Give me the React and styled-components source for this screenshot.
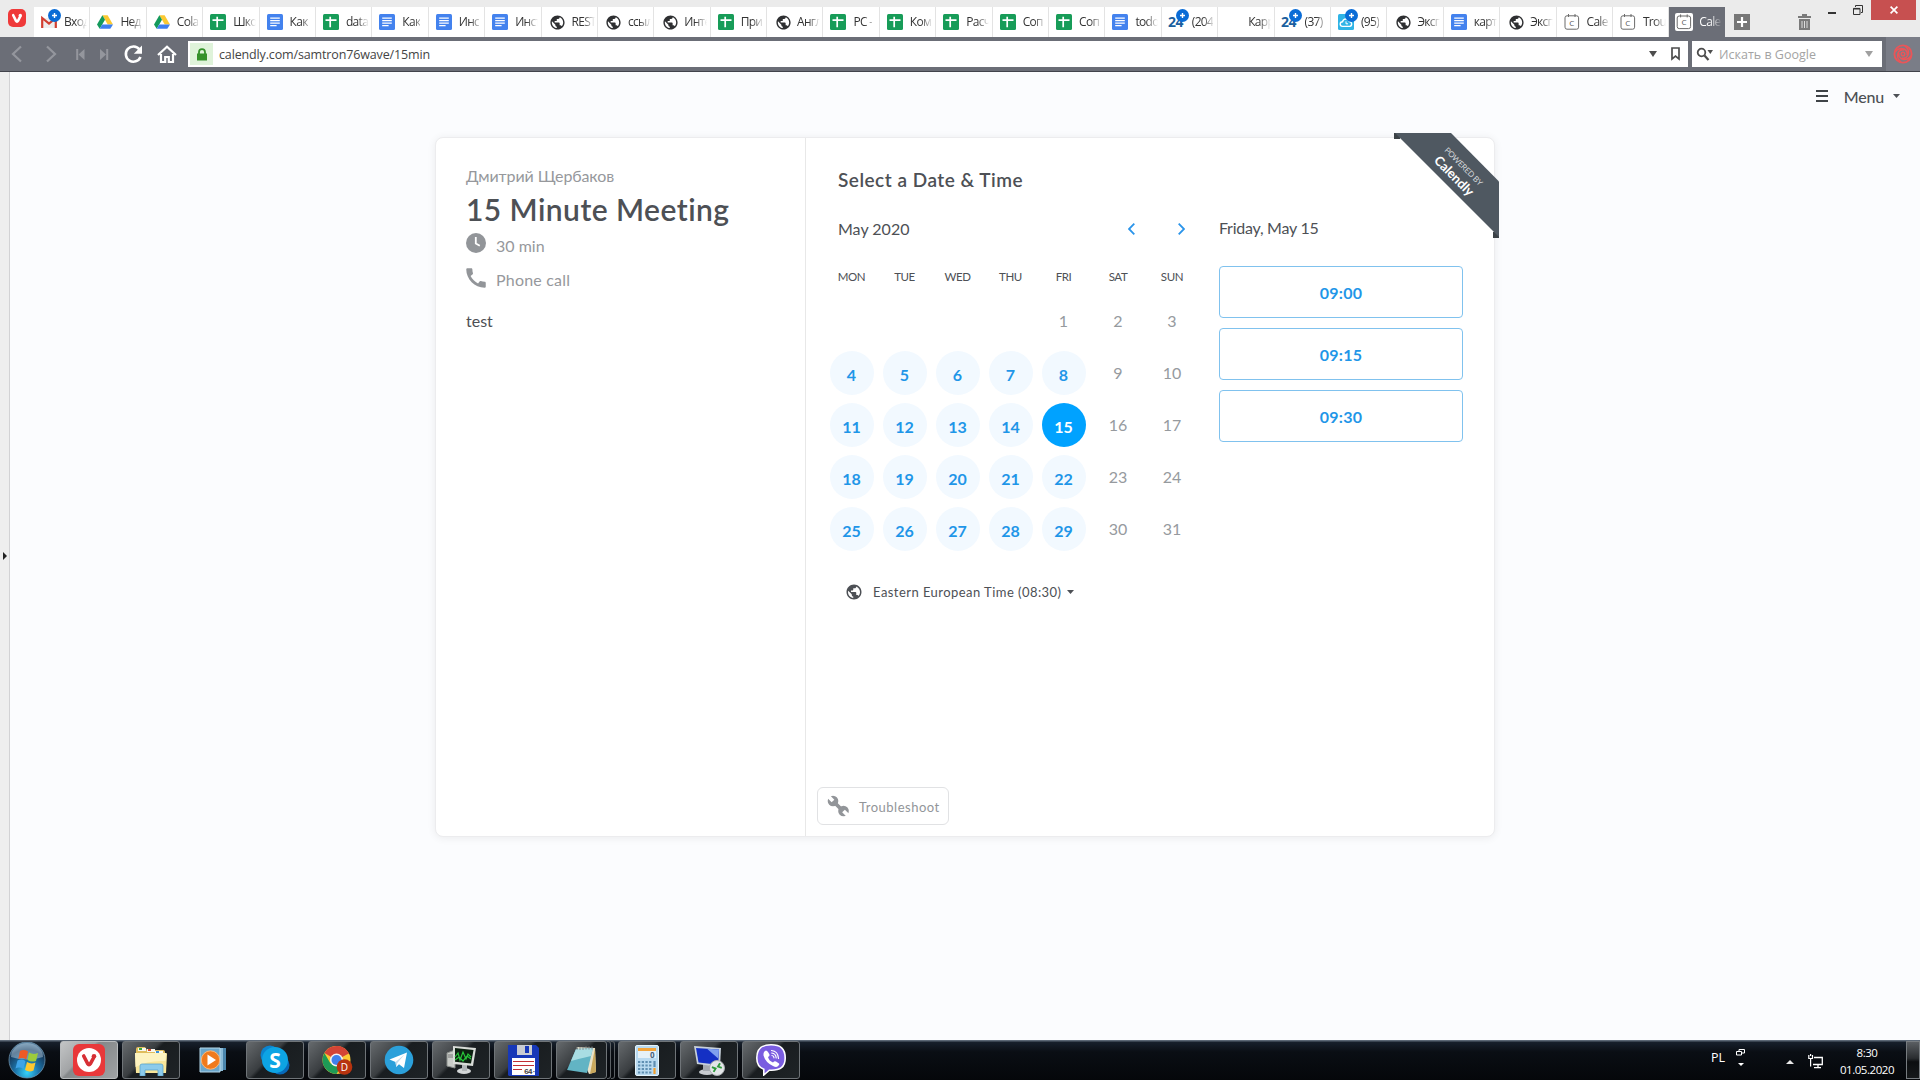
import React from "react";
import styled, { createGlobalStyle, css } from "styled-components";
import { MdPublic, MdCall } from "react-icons/md";

const UI = `"Lato", "Open Sans", sans-serif`;
const SYS = `"Open Sans", "Noto Sans", sans-serif`;

const Global = createGlobalStyle`
  * { box-sizing: border-box; }
  html, body { margin: 0; padding: 0; }
  body { width: 1920px; height: 1080px; overflow: hidden; background: #fbfcfe; }
  svg { display: block; flex: none; }
`;

const Screen = styled.div`
  display: flex;
  flex-direction: column;
  width: 1920px;
  height: 1080px;
`;

/* ---------- browser tabs ---------- */

const TabStrip = styled.header`
  display: flex;
  height: 37px;
  background: #ebebeb;
  font-family: ${SYS};
`;
const VivaldiSlot = styled.div`
  width: 34px;
  padding: 9px 0 0 8px;
`;
const TabList = styled.div`
  display: grid;
  grid-template-columns: repeat(29, 56.4px) 55.4px;
  margin-top: 7px;
  height: 30px;
`;
const Tab = styled.div`
  display: flex;
  align-items: center;
  padding: 0 0 0 ${(p) => (p.$active ? 6 : 7)}px;
  gap: ${(p) => (p.$active ? 6 : 7)}px;
  background: ${(p) => (p.$active ? "#6b6e77" : "#fff")};
  border-right: ${(p) => (p.$active ? 0 : 1)}px solid #e3e3e3;
`;
const TabLabel = styled.span`
  flex: none;
  white-space: nowrap;
  font-size: 12px;
  line-height: 18px;
  letter-spacing: -0.7px;
  color: ${(p) => (p.$active ? "#fff" : "#333")};
  mask-image: linear-gradient(90deg, #000 11px, transparent 23px);
`;
const IconHolder = styled.span`
  position: relative;
  display: block;
  flex: none;
`;
const Badge = styled.svg`
  position: absolute;
  left: 7px;
  top: -5px;
`;
const NewTab = styled.div`
  margin: 14px 0 0 9px;
`;
const WindowTools = styled.div`
  display: flex;
  flex: 1;
  justify-content: flex-end;
  padding-right: 4px;
`;
const Trash = styled.div`
  margin: 14px 17px 0 0;
`;
const Minimise = styled.div`
  width: 8px;
  height: 2px;
  margin: 12px 17px 0 0;
  background: #333;
`;
const Restore = styled.div`
  margin: 5px 8px 0 0;
`;
const Close = styled.div`
  display: flex;
  align-items: center;
  justify-content: center;
  width: 45px;
  height: 20px;
  background: #c75050;
`;

/* ---------- address bar ---------- */

const AddressBar = styled.nav`
  display: flex;
  height: 35px;
  padding-top: 4px;
  background: #6b6e77;
  border-bottom: 1px solid #41434b;
  font-family: ${SYS};
`;
const NavIcons = styled.div`
  display: flex;
  width: 188px;
  height: 26px;
`;
const Field = styled.div`
  display: flex;
  align-items: center;
  width: ${(p) => p.$w}px;
  height: 26px;
  margin-right: 4px;
  background: #fff;
`;
const Lock = styled.div`
  display: flex;
  align-items: center;
  justify-content: center;
  width: 23px;
  height: 22px;
  margin: 0 6px 0 2px;
  background: #dff3da;
`;
const Url = styled.span`
  flex: 1;
  padding-top: 2px;
  white-space: nowrap;
  font-size: 12.5px;
  line-height: 20px;
  color: ${(p) => (p.$dim ? "#a3a3a3" : "#444")};
  letter-spacing: ${(p) => (p.$dim ? 0 : -0.14)}px;
`;
const Extension = styled.div`
  display: flex;
  align-items: center;
  justify-content: center;
  width: 34px;
  height: 34px;
  margin-top: -4px;
  background: #7a7d87;
`;

/* ---------- page ---------- */

const Body = styled.div`
  display: flex;
  height: 968px;
`;
const PanelToggle = styled.aside`
  display: flex;
  align-items: center;
  width: 10px;
  padding-left: 3px;
  background: #eeeeee;
  border-right: 1px solid #d2d2d4;
`;
const Page = styled.main`
  flex: 1;
  background: #fbfcfe;
  font-family: ${UI};
  color: #4d5055;
`;
const MenuRow = styled.div`
  display: flex;
  justify-content: flex-end;
  height: 65px;
  padding: 13px 20px 0 0;
`;
const MenuText = styled.span`
  margin: 0 9px 0 16px;
  font-size: 16px;
  line-height: 24px;
  font-weight: 500;
  letter-spacing: -0.2px;
`;
const MenuGlyph = styled.span`
  padding-top: ${(p) => p.$top}px;
`;
const Card = styled.section`
  display: flex;
  width: 1060px;
  height: 700px;
  margin-left: 425px;
  background: #fff;
  border: 1px solid #ececee;
  border-radius: 8px;
  box-shadow: 0 1px 8px rgba(0, 0, 0, 0.07);
`;
const Info = styled.div`
  display: flex;
  flex-direction: column;
  width: 370px;
  padding: 27px 0 0 30px;
  border-right: 1px solid #e8e8e8;
`;
const Line = styled.div`
  white-space: nowrap;
  font-size: ${(p) => p.$size}px;
  line-height: ${(p) => p.$lh}px;
  font-weight: ${(p) => p.$weight || 400};
  letter-spacing: ${(p) => p.$ls || 0}px;
  color: ${(p) => p.$color || "#4d5055"};
  margin-top: ${(p) => p.$mt || 0}px;
`;
const Detail = styled.div`
  display: flex;
  gap: 10px;
  height: 34px;
  margin-top: ${(p) => p.$mt || 0}px;
`;
const PhoneIcon = styled(MdCall)`
  margin: -2px -3px 0 -3px;
`;
const Booking = styled.div`
  display: flex;
  flex-direction: column;
  flex: 1;
  padding: 29px 0 0 32px;
`;
const Columns = styled.div`
  display: flex;
  height: 594px;
`;
const Calendar = styled.div`
  width: 381px;
`;
const MonthRow = styled.div`
  display: flex;
  align-items: center;
  height: 24px;
  padding-right: 34px;
  margin-top: 24px;
  gap: 43px;
`;
const MonthName = styled(Line)`
  flex: 1;
`;
const WeekGrid = styled.div`
  display: grid;
  grid-template-columns: repeat(5, 53px) 56px 52px;
  margin: 24px 0 0 -13px;
  width: 373px;
  justify-items: center;
`;
const Weekday = styled.div`
  height: 34px;
  font-size: 11.5px;
  line-height: 24px;
  letter-spacing: -0.4px;
  color: #4d5055;
`;
const Day = styled.div`
  display: flex;
  align-items: center;
  justify-content: center;
  width: 44px;
  height: 44px;
  margin-bottom: 8px;
  font-size: 16px;
  line-height: 20px;
  border-radius: 50%;
  color: #969a9e;
  ${(p) =>
    p.$open &&
    css`
      padding-top: 4px;
      font-weight: 700;
      color: ${p.$selected ? "#fff" : "#1f96e8"};
      background: ${p.$selected ? "#00a2ff" : "#f2f9ff"};
    `}
`;
const Zone = styled.div`
  display: flex;
  align-items: center;
  gap: 5px;
  margin: 22px 0 0 7px;
`;
const ZoneGlobe = styled(MdPublic)`
  margin-right: 5px;
`;
const Slots = styled.div`
  display: flex;
  flex-direction: column;
  width: 244px;
`;
const SlotDate = styled(Line)`
  margin-bottom: 27px;
`;
const Slot = styled.div`
  display: flex;
  align-items: center;
  justify-content: center;
  height: 52px;
  margin-bottom: 10px;
  padding-top: 1px;
  border: 1px solid #80c2ee;
  border-radius: 4px;
  font-size: 16px;
  font-weight: 700;
  letter-spacing: 0.3px;
  color: #1f96e8;
`;
const Trouble = styled.div`
  display: flex;
  align-items: center;
  width: 132px;
  height: 38px;
  margin-left: -21px;
  padding-left: 9px;
  gap: 10px;
  border: 1px solid #e1e2e4;
  border-radius: 6px;
`;
const RibbonBox = styled.div`
  position: absolute;
  left: 1394px;
  top: 133px;
  width: 105px;
  height: 105px;
`;
const RibbonText = styled.div`
  position: absolute;
  left: 24px;
  top: 26px;
  width: 80px;
  transform: rotate(45deg);
  text-align: center;
  color: #fff;
  white-space: nowrap;
`;
const Powered = styled.div`
  font-size: 8px;
  line-height: 10px;
  letter-spacing: -0.2px;
  color: #d5d9dc;
`;
const Brand = styled.div`
  font-size: 13px;
  line-height: 16px;
  font-weight: 700;
`;

/* ---------- taskbar ---------- */

const Taskbar = styled.footer`
  display: flex;
  height: 40px;
  padding-top: 1px;
  background: linear-gradient(180deg, #5c6876 0, #5c6876 1px, #17202c 2px, #0a0e14 12px, #05070a 100%);
  font-family: ${SYS};
  color: #fff;
`;
const Start = styled.div`
  width: 60px;
  padding: 1px 0 0 8px;
`;
const Task = styled.div`
  display: flex;
  align-items: center;
  justify-content: center;
  width: ${(p) => p.$w || 58}px;
  height: 38px;
  margin-right: ${(p) => (p.$stack ? 0 : 4)}px;
  ${(p) =>
    !p.$bare &&
    css`
      border: 1px solid ${p.$active ? "#b8bbbd" : "#6f7478"};
      border-radius: 3px;
      background: ${p.$active
        ? "linear-gradient(135deg, #c3c5c6 0, #a2a4a6 38%, #85888a 42%, #9fa2a4 100%)"
        : "linear-gradient(135deg, #666a6d 0, #3a3e41 40%, #191d20 46%, #1e2326 100%)"};
    `}
`;
const StackEdge = styled.div`
  width: 4px;
  height: 38px;
  margin-right: ${(p) => (p.$last ? 3 : 0)}px;
  border: 1px solid #5b6064;
  border-left: 0;
  border-radius: 0 3px 3px 0;
`;
const Spacer = styled.div`
  flex: 1;
`;
const Lang = styled.span`
  width: 25px;
  padding-top: 8px;
  font-size: 12.5px;
  line-height: 18px;
`;
const LangTools = styled.div`
  display: flex;
  flex-direction: column;
  align-items: center;
  gap: 7px;
  width: 9px;
  padding-top: 8px;
`;
const TrayArrow = styled.div`
  margin: 19px 14px 0 41px;
`;
const Network = styled.div`
  margin: 13px 5px 0 0;
`;
const Clock = styled.div`
  width: 78px;
  padding-top: 3px;
  text-align: center;
  font-size: 11.5px;
  line-height: 17px;
  letter-spacing: -0.45px;
`;
const Peek = styled.div`
  width: 14px;
  height: 38px;
  border: 1px solid #777c80;
  background: linear-gradient(180deg, #5a5e62 0, #2a2d30 45%, #0c0e10 55%, #16191b 100%);
`;

/* ---------- drawings ---------- */

const VivaldiMark = ({ size = 18 }) => (
  <svg width={size} height={size} viewBox="0 0 18 18">
    <rect width="18" height="18" rx="5" fill="#ef3939" />
    <path d="M5.2 6.2 L8 11.9 Q9 13.6 10 11.9 L12.3 7.4" fill="none" stroke="#fff" strokeWidth="2.6" strokeLinecap="round" strokeLinejoin="round" />
    <circle cx="12.3" cy="6.4" r="1.7" fill="#fff" />
  </svg>
);
const PlusBadge = () => (
  <Badge width="13" height="13" viewBox="0 0 13 13">
    <circle cx="6.5" cy="6.5" r="6.5" fill="#0a6cd6" />
    <path d="M6.5 4v5M4 6.5h5" stroke="#fff" strokeWidth="1.4" />
  </Badge>
);
const TabGlobe = styled(MdPublic)`
  margin: 0 -1.500px 0 0.5px;
`;
const favicons = {
  gmail: (
    <svg width="16" height="16" viewBox="0 0 16 16">
      <path d="M2 4h12v10H2z" fill="#eee" />
      <path d="M1.2 14V4L8 9.5 14.8 4v10" fill="none" stroke="#d23f31" strokeWidth="2.2" />
    </svg>
  ),
  drive: (
    <svg width="16" height="16" viewBox="0 0 16 16">
      <path d="M5.4 1.2h5.2L16 10.4h-5.3z" fill="#fbc931" />
      <path d="M5.4 1.2 8 5.7 2.7 14.8 0 10.4z" fill="#149a5c" />
      <path d="M5.2 10.4H16l-2.7 4.4H2.7z" fill="#3d7fee" />
    </svg>
  ),
  sheet: (
    <svg width="16" height="16" viewBox="0 0 16 16">
      <rect width="16" height="16" rx="1.5" fill="#179c58" />
      <path d="M2.5 6.2h11M7.2 2.8v10.4" stroke="#fff" strokeWidth="1.7" />
    </svg>
  ),
  doc: (
    <svg width="16" height="16" viewBox="0 0 16 16">
      <rect width="16" height="16" rx="1.5" fill="#4382ee" />
      <path d="M3.2 4.2h9.6M3.2 6.7h9.6M3.2 9.2h9.6M3.2 11.7h6.4" stroke="#fff" strokeWidth="1.3" />
    </svg>
  ),
  globe: <TabGlobe size={17} color="#2e2f31" />,
  b24: (
    <svg width="16" height="16" viewBox="0 0 16 16" overflow="visible">
      <text x="-1" y="13" fontFamily="Open Sans" fontWeight="700" fontSize="14" letterSpacing="-0.5" fill="#1b5f9e">24</text>
    </svg>
  ),
  cloud: (
    <svg width="16" height="16" viewBox="0 0 16 16">
      <rect width="16" height="16" rx="1.5" fill="#2fb4e6" />
      <path d="M4.500 12.400a2.300 2.300 0 0 1 0-4.600A3.600 3.600 0 0 1 11.400 7.500a2.500 2.500 0 0 1 .4 4.900z" fill="none" stroke="#fff" strokeWidth="1.400" />
      <path d="M8 7.400v2.400h2" fill="none" stroke="#fff" strokeWidth="1" />
    </svg>
  ),
  blank: <svg width="16" height="16" />,
  cal: (
    <svg width="16" height="16" viewBox="0 0 16 16">
      <rect x="1" y="1.8" width="13.6" height="13.4" rx="2" fill="#fff" stroke="#6b6b6b" />
      <path d="M4.5 0v3M11 0v3" stroke="#6b6b6b" />
      <text x="5.2" y="11.6" fontFamily="Open Sans" fontSize="8" fill="#555">C</text>
    </svg>
  ),
  calActive: (
    <svg width="18" height="18" viewBox="0 0 18 18">
      <rect width="18" height="18" rx="2" fill="#fff" />
      <rect x="2.2" y="3" width="13.4" height="12.6" rx="2" fill="#fff" stroke="#6b6b6b" />
      <path d="M5.6 1.4v3M12.2 1.4v3" stroke="#6b6b6b" />
      <text x="6.4" y="12.4" fontFamily="Open Sans" fontSize="8" fill="#555">C</text>
    </svg>
  ),
};

const TABS = [
  ["gmail", "Вход", 1], ["drive", "Нед"], ["drive", "Cola"], ["sheet", "Шко"],
  ["doc", "Как"], ["sheet", "data"], ["doc", "Как"], ["doc", "Инс"], ["doc", "Инст"],
  ["globe", "REST"], ["globe", "ссыл"], ["globe", "Инте"], ["sheet", "При"], ["globe", "Англ"],
  ["sheet", "PC -"], ["sheet", "Ком"], ["sheet", "Расч"], ["sheet", "Соп"], ["sheet", "Соп"],
  ["doc", "todo"], ["b24", "(204", 1], ["blank", "Карр"], ["b24", "(37)", 1], ["cloud", "(95)", 1],
  ["globe", "Эксп"], ["doc", "карт"], ["globe", "Эксп"], ["cal", "Cale"], ["cal", "Trou"],
  ["calActive", "Cale"],
];

const NavGlyphs = () => (
  <svg width="188" height="26" viewBox="0 41 188 26" fill="none">
    <path d="M21 46.5 13 54l8 7.5M47 46.5 55 54l-8 7.5" stroke="#94969d" strokeWidth="2.2" />
    <path d="M77.2 49v11M107.2 49v11" stroke="#94969d" strokeWidth="2" />
    <path d="M84.5 49v11l-6-5.5zM100 49v11l6-5.5z" fill="#94969d" />
    <path d="M139.5 49.5A7.6 7.6 0 1 0 140.5 57" stroke="#fff" strokeWidth="2.6" />
    <path d="M142 45.5v8.2h-8.2z" fill="#fff" />
    <path d="M158 55 167 46.8 176 55M161 54v8h4.2v-5h3.6v5h4.2v-8" stroke="#fff" strokeWidth="2.2" />
  </svg>
);
const Caret = ({ w, h, color }) => (
  <svg width={w} height={h} viewBox="0 0 10 6" preserveAspectRatio="none"><path d="M0 0h10L5 6z" fill={color} /></svg>
);

const StartOrb = () => (
  <svg width="38" height="37" viewBox="0 0 38 37">
    <defs>
      <radialGradient id="orb" cx="50%" cy="85%" r="80%">
        <stop offset="0" stopColor="#35d3fb" /><stop offset=".4" stopColor="#1c76ac" /><stop offset=".8" stopColor="#16385a" /><stop offset="1" stopColor="#4f7898" />
      </radialGradient>
    </defs>
    <circle cx="19" cy="18" r="18" fill="url(#orb)" stroke="#6c93ad" strokeWidth=".8" />
    <path d="M3 15a16 14 0 0 1 32 0q-16 5-32 0z" fill="#c5dcea" opacity=".45" />
    <path d="M12 9q4-2 8 .5L18.300 17.500q-4-2.500-8-.5z" fill="#ee5a25" />
    <path d="M21 10.500q4 2.500 9 .5l-2 8q-5 1.500-8.500-1z" fill="#9dcb3b" />
    <path d="M9.500 18.500q4-2 8 .5l-2 8q-4-2.500-8-.5z" fill="#3ea4e8" />
    <path d="M19 20q4 2.500 8.500.5l-2 8q-4.500 2-8.500-.5z" fill="#fdc82f" />
  </svg>
);
const taskIcons = {
  vivaldi: (
    <svg width="32" height="32" viewBox="0 0 32 32">
      <rect width="32" height="32" rx="6" fill="#e9383a" />
      <circle cx="16" cy="16" r="12" fill="#fff" />
      <path d="M10.700 12 14.700 19.800q1.300 2 2.600 0L20.500 14" fill="none" stroke="#d72f35" strokeWidth="3.600" strokeLinecap="round" strokeLinejoin="round" />
      <circle cx="21" cy="12.200" r="2.300" fill="#d72f35" />
    </svg>
  ),
  explorer: (
    <svg width="34" height="32" viewBox="0 0 34 32">
      <path d="M2 5q0-2 2-2h7l2 3h16q2 0 2 2v19H2z" fill="#e0bd5c" />
      <path d="M4 4h8v3H4zM13 5h8v3h-8zM21 7h8v3h-8z" fill="#f8f8f0" />
      <path d="M5 4h3v2H5z" fill="#3ba53b" /><path d="M14 5h3v2h-3z" fill="#d84a2a" /><path d="M22 7h3v2h-3z" fill="#3a8fd8" />
      <path d="M1 9h31q1 0 1 1l-1 19H2z" fill="#f8e69a" />
      <path d="M1 9h31l-.5 8Q14 16 1.500 23z" fill="#fdf3c0" />
      <path d="M6 32V22q0-2 2-2h19q2 0 2 2v10h-5v-6H11v6z" fill="#8ccbec" stroke="#5ba5cf" strokeWidth=".8" />
    </svg>
  ),
  player: (
    <svg width="28" height="26" viewBox="0 0 28 26">
      <path d="M7 1h20v22H7z" fill="#4b86ad" /><path d="M5 1h19v23H5z" fill="#8cbcd8" /><path d="M1 1h20v24H1z" fill="#6aa6cb" stroke="#b4d8ea" />
      <circle cx="11.500" cy="13" r="9.200" fill="#f07a1c" stroke="#fbb877" />
      <path d="M8.500 7.500v11l8.500-5.500z" fill="#fff" />
    </svg>
  ),
  skype: (
    <svg width="30" height="30" viewBox="0 0 30 30">
      <circle cx="10" cy="10" r="9.500" fill="#0b84cf" /><circle cx="20" cy="20" r="9.500" fill="#0769b9" />
      <circle cx="15" cy="15" r="13" fill="#0da4e4" />
      <text x="15" y="22.500" textAnchor="middle" fontFamily="Open Sans" fontWeight="700" fontSize="21" fill="#fff">S</text>
    </svg>
  ),
  chrome: (
    <svg width="31" height="30" viewBox="0 0 31 30">
      <circle cx="14.500" cy="15" r="14" fill="#fcc934" />
      <path d="M14.500 15 2.400 8A14 14 0 0 1 26.800 8.400z" fill="#d34436" />
      <path d="M2.400 8A14 14 0 0 0 14.500 29l6-10.500L8.500 18.500z" fill="#1e9b56" />
      <path d="M14.500 8.500H26.800a14 14 0 0 0-12.300-7.500z" fill="#d34436" />
      <circle cx="14.500" cy="15" r="6.500" fill="#f4f4f4" /><circle cx="14.500" cy="15" r="5" fill="#4081ec" />
      <circle cx="22.500" cy="22" r="7.800" fill="#b7330f" />
      <text x="22.500" y="25.600" textAnchor="middle" fontFamily="Open Sans" fontSize="10" fill="#fff">D</text>
    </svg>
  ),
  telegram: (
    <svg width="30" height="30" viewBox="0 0 30 30">
      <circle cx="15" cy="15" r="14.300" fill="#2ba0da" />
      <path d="M5.500 14.500 23 7.500l-3 15.500-5-3.700-2.800 2.700-.7-5z" fill="#fff" /><path d="m11.500 17 9-7.500-7.200 8.600-1 4z" fill="#c3dcec" />
    </svg>
  ),
  monitor: (
    <svg width="32" height="30" viewBox="0 0 32 30">
      <path d="M2 8 10 5v18l-8-2z" fill="#c9ccc8" stroke="#8b8f8c" /><path d="M3 10h6M3 12h6" stroke="#777" />
      <ellipse cx="19" cy="26" rx="7" ry="3" fill="#d3d6d7" /><path d="M17 20h5v6h-5z" fill="#b2b6b8" />
      <path d="M8 1 31 3l-3 18-20-2z" fill="#d9dcd8" /><path d="M10 3 28.500 5 26 18.500l-16-1.700z" fill="#0c1f10" />
      <path d="m10 12 3-4 2 7 3-8 3 7 2-5 3 3M10 15l4-3 4 4 4-5 4 3" fill="none" stroke="#28c53a" strokeWidth="1.200" />
    </svg>
  ),
  floppy: (
    <svg width="31" height="32" viewBox="0 0 31 32">
      <path d="M0 1h28l3 3v28H1L0 31z" fill="#1738b8" />
      <path d="M9 1h15v10H9z" fill="#c9ccd2" /><path d="M17 2h4v7h-4z" fill="#1738b8" />
      <path d="M4 14h23v17H4z" fill="#fff" /><path d="M5 17.500h21M5 21.500h21M5 25.500h9" stroke="#c12f35" strokeWidth="1.200" />
      <text x="16" y="29.500" fontFamily="Liberation Mono" fontWeight="700" fontSize="8" letterSpacing="-1" fill="#444">64·</text>
    </svg>
  ),
  notepad: (
    <svg width="31" height="30" viewBox="0 0 31 30">
      <path d="m11 2 18 1 1 24-7 2z" fill="#e9e2c8" /><path d="m29 3 1 24-6 2z" fill="#c9a85c" />
      <path d="m10 4 17-1-6 25L1 25z" fill="#62b4c4" /><path d="m10 4 17-1-2 8Q12 14 5 16z" fill="#a9dde3" />
      <path d="M11 2v3M14 2v3M17 2v3M20 1.500v3M23 1.500v3M26 1.500v3" stroke="#8a8f92" />
    </svg>
  ),
  calc: (
    <svg width="24" height="31" viewBox="0 0 24 31">
      <rect x=".5" y=".5" width="23" height="30" rx="1.500" fill="#b9daf0" stroke="#e5f4fb" />
      <path d="M3 3h18v3H3z" fill="#f3a53c" /><path d="M3 6h18v7H3z" fill="#e6f1f7" />
      <text x="15" y="12.500" fontFamily="Open Sans" fontWeight="700" fontSize="8" fill="#45627c">0</text>
      <path d="M3 17h14M3 20.500h14M3 24h14M3 27.500h14" stroke="#5f8fb2" strokeWidth="2.200" strokeDasharray="2.300 1.400" />
      <path d="M19.500 16v6" stroke="#5f8fb2" strokeWidth="2.200" /><path d="M19.500 23v6" stroke="#f0a030" strokeWidth="2.200" />
    </svg>
  ),
  rdp: (
    <svg width="32" height="32" viewBox="0 0 32 32">
      <ellipse cx="14" cy="28" rx="8" ry="3" fill="#c8ccd0" /><path d="M10 20h7v7h-7z" fill="#a5aab0" />
      <path d="m1 2 27 2-1 19L4 20z" fill="#c7d0da" /><path d="m3 4 23 1.600-.8 15.200L5.500 18.400z" fill="#1430c4" /><path d="m14 4.800 12 .8-.8 9z" fill="#7fa0ee" />
      <circle cx="24" cy="24" r="7.500" fill="#e3e6e8" stroke="#a9adb0" />
      <path d="m19.500 21.500 3 2.500-3 2.500M28.500 20.500l-3 2.500 3 2.500" fill="none" stroke="#2d9a3a" strokeWidth="1.900" transform="rotate(-20 24 24)" />
    </svg>
  ),
  viber: (
    <svg width="30" height="32" viewBox="0 0 30 32">
      <path d="M15 .8C5.500.8.800 4.500.800 14c0 6 2 9.500 7 11.300V31l5.500-4.800C24.500 26.800 29.200 23 29.200 14 29.200 4.500 24.500.8 15 .8z" fill="#7a5de0" stroke="#fff" strokeWidth="1.600" />
      <path d="M8 8q2-3 4 0l1.500 2.500q.5 1.500-1.500 2.500 1 4 5 5.500 1.500-2 3-1l3 2q1 1-1.500 3-1.500 1-4.500-.5Q9.500 18.500 7.500 11.500 7.200 9.500 8 8z" fill="#fff" />
      <path d="M15.500 6.500q6.500.5 7 8M15.700 9q4.200.5 4.500 5M16 11.500q2 .3 2 2.300" fill="none" stroke="#fff" strokeWidth="1.200" strokeLinecap="round" />
    </svg>
  ),
};

const WEEK = ["MON", "TUE", "WED", "THU", "FRI", "SAT", "SUN"];
const CELLS = [null, null, null, null, ...Array.from({ length: 31 }, (_, i) => i + 1)];

export default function App() {
  return (
    <Screen>
      <Global />
      <TabStrip>
        <VivaldiSlot><VivaldiMark /></VivaldiSlot>
        <TabList>
          {TABS.map(([icon, label, badge], i) => (
            <Tab key={i} $active={i === 29}>
              <IconHolder>{favicons[icon]}{badge && <PlusBadge />}</IconHolder>
              <TabLabel $active={i === 29}>{label}</TabLabel>
            </Tab>
          ))}
        </TabList>
        <NewTab>
          <svg width="16" height="16" viewBox="0 0 16 16"><rect width="16" height="16" fill="#777" /><path d="M8 3v10M3 8h10" stroke="#fff" strokeWidth="2.200" /></svg>
        </NewTab>
        <WindowTools>
          <Trash>
            <svg width="13" height="16" viewBox="0 0 13 16"><path d="M4 0h5v2h4v2H0V2h4zM1 5h11v11H1z" fill="#7a7a7a" /><path d="M4 7v7M6.500 7v7M9 7v7" stroke="#ddd" strokeWidth="1" /></svg>
          </Trash>
          <Minimise />
          <Restore>
            <svg width="10" height="10" viewBox="0 0 10 10" fill="none" stroke="#333"><path d="M.5 3.500h6.500v6H.5z" /><path d="M.5 3.700h6.500" strokeWidth="1.600" /><path d="M2.500 2V.5h7v7H8" /></svg>
          </Restore>
          <Close><svg width="8" height="8" viewBox="0 0 8 8"><path d="m.6.600 6.800 6.800M7.400.600.6 7.400" stroke="#fff" strokeWidth="1.700" /></svg></Close>
        </WindowTools>
      </TabStrip>

      <AddressBar>
        <NavIcons><NavGlyphs /></NavIcons>
        <Field $w={1500}>
          <Lock><svg width="12" height="13" viewBox="0 0 12 13"><path d="M3 6V4.200a3 3 0 0 1 6 0V6" fill="none" stroke="#35912a" strokeWidth="1.800" /><rect x="1" y="5.500" width="10" height="7" fill="#35912a" /></svg></Lock>
          <Url>calendly.com/samtron76wave/15min</Url>
          <Caret w={8} h={6} color="#4d4d4d" />
          <svg width="31" height="14" viewBox="0 0 31 14"><path d="M15 1h7v11l-3.500-3-3.500 3z" fill="none" stroke="#4d4d4d" strokeWidth="1.700" /></svg>
        </Field>
        <Field $w={190}>
          <svg width="27" height="16" viewBox="0 0 27 16"><circle cx="9.500" cy="6.500" r="3.800" fill="none" stroke="#4d4d4d" strokeWidth="1.800" /><path d="m12.500 9.500 4 4.500" stroke="#4d4d4d" strokeWidth="2.200" /><path d="M15.500 4h5.500l-2.700 4z" fill="#4d4d4d" /></svg>
          <Url $dim>Искать в Google</Url>
          <Caret w={8} h={6} color="#a0a0a0" />
          <svg width="9" height="1" />
        </Field>
        <Extension>
          <svg width="20" height="20" viewBox="0 0 20 20" fill="none" stroke="#ea5558">
            <circle cx="10" cy="10" r="8.600" strokeWidth="1.900" /><circle cx="10" cy="10" r="1.800" strokeWidth="1.500" />
            <path d="M2 8q4-5 9-3 4 2 3 6M12 2q5 4 3 9-2 4-6 3M18 12q-4 5-9 3-4-2-3-6M8 18q-5-4-3-9 2-4 6-3" strokeWidth="1.400" />
          </svg>
        </Extension>
      </AddressBar>

      <Body>
        <PanelToggle><svg width="4" height="8" viewBox="0 0 4 8"><path d="M0 0v8l4-4z" fill="#222" /></svg></PanelToggle>
        <Page>
          <MenuRow>
            <MenuGlyph $top={5}><svg width="12" height="12" viewBox="0 0 12 12"><path d="M0 1h12M0 6h12M0 11h12" stroke="#3f4347" strokeWidth="1.800" /></svg></MenuGlyph>
            <MenuText>Menu</MenuText>
            <MenuGlyph $top={9}><Caret w={7} h={4} color="#4d5055" /></MenuGlyph>
          </MenuRow>
          <Card>
            <Info>
              <Line $size={16} $lh={22} $ls={-0.1} $color="#96989c">Дмитрий Щербаков</Line>
              <Line $size={30} $lh={38} $weight={600} $ls={0.45} $mt={3}>15 Minute Meeting</Line>
              <Detail $mt={5}>
                <svg width="20" height="20" viewBox="0 0 20 20"><circle cx="10" cy="10" r="10" fill="#929599" /><path d="M9.800 4v6.500l4 2.300" fill="none" stroke="#fff" strokeWidth="1.800" /></svg>
                <Line $size={16} $lh={22} $color="#96989c" $mt={2}>30 min</Line>
              </Detail>
              <Detail>
                <PhoneIcon size={26} color="#929599" />
                <Line $size={16} $lh={22} $ls={0.2} $color="#96989c" $mt={2}>Phone call</Line>
              </Detail>
              <Line $size={16} $lh={22} $mt={9}>test</Line>
            </Info>
            <Booking>
              <Line $size={19} $lh={26} $weight={600} $ls={0.5}>Select a Date &amp; Time</Line>
              <Columns>
                <Calendar>
                  <MonthRow>
                    <MonthName $size={16} $lh={22}>May 2020</MonthName>
                    <svg width="7" height="12" viewBox="0 0 7 12"><path d="M6.300.7 1 6l5.300 5.300" fill="none" stroke="#2a94ea" strokeWidth="1.800" /></svg>
                    <svg width="7" height="12" viewBox="0 0 7 12"><path d="M.7.700 6 6 .7 11.300" fill="none" stroke="#2a94ea" strokeWidth="1.800" /></svg>
                  </MonthRow>
                  <WeekGrid>
                    {WEEK.map((d) => <Weekday key={d}>{d}</Weekday>)}
                    {CELLS.map((d, i) => <Day key={i} $open={d > 3 && i % 7 < 5} $selected={d === 15}>{d}</Day>)}
                  </WeekGrid>
                  <Zone>
                    <ZoneGlobe size={18} color="#4d5055" />
                    <Line $size={13} $lh={20} $ls={0.45} $mt={1}>Eastern European Time (08:30)</Line>
                    <Caret w={7} h={4} color="#4d5055" />
                  </Zone>
                </Calendar>
                <Slots>
                  <SlotDate $size={16} $lh={22} $ls={-0.25} $mt={24}>Friday, May 15</SlotDate>
                  <Slot>09:00</Slot><Slot>09:15</Slot><Slot>09:30</Slot>
                </Slots>
              </Columns>
              <Trouble>
                <svg width="22" height="22" viewBox="0 0 22 22">
                  <path d="m6 6 10 10" stroke="#929599" strokeWidth="3.800" />
                  <circle cx="6" cy="6" r="5.300" fill="#929599" /><circle cx="16.500" cy="16" r="5.300" fill="#929599" />
                  <path d="M1 1 6 6M21.500 21 16.500 16" stroke="#fff" strokeWidth="3.800" />
                </svg>
                <Line $size={13} $lh={20} $ls={0.5} $color="#929599" $mt={1}>Troubleshoot</Line>
              </Trouble>
            </Booking>
          </Card>
          <RibbonBox>
            <svg width="105" height="105" viewBox="0 0 105 105"><path d="M0 0h6v6H0zM99 99h6v6h-6z" fill="#3b4146" /><path d="M1 0h56l48 48.500V104z" fill="#4f5861" /></svg>
            <RibbonText><Powered>POWERED BY</Powered><Brand>Calendly</Brand></RibbonText>
          </RibbonBox>
        </Page>
      </Body>

      <Taskbar>
        <Start><StartOrb /></Start>
        <Task $active>{taskIcons.vivaldi}</Task>
        <Task>{taskIcons.explorer}</Task>
        <Task $bare>{taskIcons.player}</Task>
        <Task>{taskIcons.skype}</Task>
        <Task>{taskIcons.chrome}</Task>
        <Task>{taskIcons.telegram}</Task>
        <Task>{taskIcons.monitor}</Task>
        <Task>{taskIcons.floppy}</Task>
        <Task $w={51} $stack>{taskIcons.notepad}</Task>
        <StackEdge /><StackEdge $last />
        <Task>{taskIcons.calc}</Task>
        <Task>{taskIcons.rdp}</Task>
        <Task>{taskIcons.viber}</Task>
        <Spacer />
        <Lang>PL</Lang>
        <LangTools>
          <svg width="9" height="7" viewBox="0 0 9 7" fill="none" stroke="#fff"><path d="M.5 2.500h5v3.500h-5zM3 2V.5h5.500v3.500H6" /></svg>
          <Caret w={6} h={3} color="#fff" />
        </LangTools>
        <TrayArrow><svg width="8" height="4" viewBox="0 0 8 4"><path d="M0 4h8L4 0z" fill="#e8e8e8" /></svg></TrayArrow>
        <Network>
          <svg width="15" height="15" viewBox="0 0 15 15" fill="none" stroke="#fff">
            <path d="M6 3.500h8.300v7H5M10 10.500v3M6 13.700h7" strokeWidth="1.300" /><path d="M.8 1v3.500h3.700V1M2.600 0v2M2.600 4.500v8" strokeWidth="1.200" />
          </svg>
        </Network>
        <Clock><div>8:30</div><div>01.05.2020</div></Clock>
        <Peek />
      </Taskbar>
    </Screen>
  );
}
